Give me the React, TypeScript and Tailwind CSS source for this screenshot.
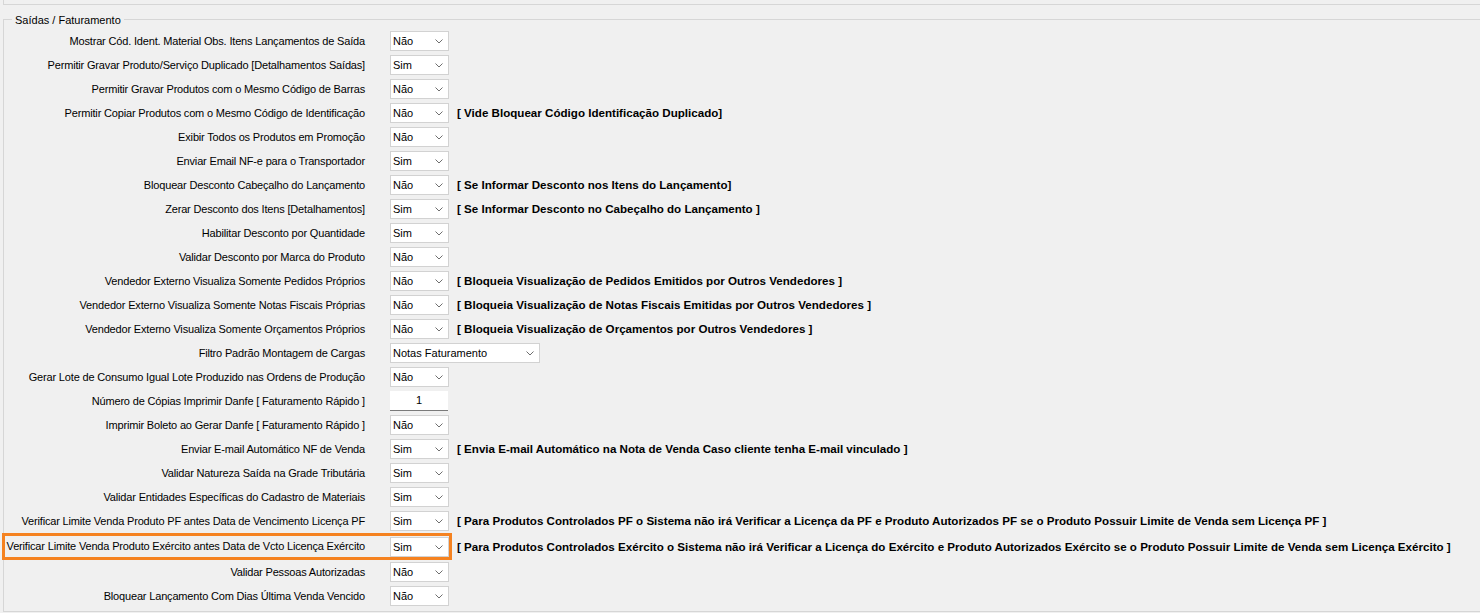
import React from 'react'

type Row = {
  label: string
  value?: string
  kind?: 'select' | 'wide' | 'number'
  note?: string
  marked?: boolean
}

const rows: Row[] = [
  { label: 'Mostrar Cód. Ident. Material Obs. Itens Lançamentos de Saída', value: 'Não' },
  { label: 'Permitir Gravar Produto/Serviço Duplicado [Detalhamentos Saídas]', value: 'Sim' },
  { label: 'Permitir Gravar Produtos com o Mesmo Código de Barras', value: 'Não' },
  { label: 'Permitir Copiar Produtos com o Mesmo Código de Identificação', value: 'Não', note: '[ Vide Bloquear Código Identificação Duplicado]' },
  { label: 'Exibir Todos os Produtos em Promoção', value: 'Não' },
  { label: 'Enviar Email NF-e para o Transportador', value: 'Sim' },
  { label: 'Bloquear Desconto Cabeçalho do Lançamento', value: 'Não', note: '[ Se Informar Desconto nos Itens do Lançamento]' },
  { label: 'Zerar Desconto dos Itens [Detalhamentos]', value: 'Sim', note: '[ Se Informar Desconto no Cabeçalho do Lançamento ]' },
  { label: 'Habilitar Desconto por Quantidade', value: 'Sim' },
  { label: 'Validar Desconto por Marca do Produto', value: 'Não' },
  { label: 'Vendedor Externo Visualiza Somente Pedidos Próprios', value: 'Não', note: '[ Bloqueia Visualização de Pedidos Emitidos por Outros Vendedores ]' },
  { label: 'Vendedor Externo Visualiza Somente Notas Fiscais Próprias', value: 'Não', note: '[ Bloqueia Visualização de Notas Fiscais Emitidas por Outros Vendedores ]' },
  { label: 'Vendedor Externo Visualiza Somente Orçamentos Próprios', value: 'Não', note: '[ Bloqueia Visualização de Orçamentos por Outros Vendedores ]' },
  { label: 'Filtro Padrão Montagem de Cargas', value: 'Notas Faturamento', kind: 'wide' },
  { label: 'Gerar Lote de Consumo Igual Lote Produzido nas Ordens de Produção', value: 'Não' },
  { label: 'Número de Cópias Imprimir Danfe [ Faturamento Rápido ]', value: '1', kind: 'number' },
  { label: 'Imprimir Boleto ao Gerar Danfe [ Faturamento Rápido ]', value: 'Não' },
  { label: 'Enviar E-mail Automático NF de Venda', value: 'Sim', note: '[ Envia E-mail Automático na Nota de Venda Caso cliente tenha E-mail vinculado ]' },
  { label: 'Validar Natureza Saída na Grade Tributária', value: 'Sim' },
  { label: 'Validar Entidades Específicas do Cadastro de Materiais', value: 'Sim' },
  { label: 'Verificar Limite Venda Produto PF antes Data de Vencimento Licença PF', value: 'Sim', note: '[ Para Produtos Controlados PF o Sistema não irá Verificar a Licença da PF e Produto Autorizados PF se o Produto Possuir Limite de Venda sem Licença PF ]' },
  { label: 'Verificar Limite Venda Produto Exército antes Data de Vcto Licença Exército', value: 'Sim', marked: true, note: '[ Para Produtos Controlados Exército o Sistema não irá Verificar a Licença do Exército e Produto Autorizados Exército se o Produto Possuir Limite de Venda sem Licença Exército ]' },
  { label: 'Validar Pessoas Autorizadas', value: 'Não' },
  { label: 'Bloquear Lançamento Com Dias Última Venda Vencido', value: 'Não' },
]

function Chevron() {
  return (
    <svg width="8" height="5" viewBox="0 0 8 5" className="shrink-0">
      <polyline points="0.5,0.5 4,4 7.5,0.5" fill="none" stroke="#6e6e6e" strokeWidth="1" />
    </svg>
  )
}

function Field({ row }: { row: Row }) {
  if (row.kind === 'number') {
    return (
      <div className="ml-[25px] w-[58px] h-[20px] bg-white border-b border-[#7a7a7a] flex items-center justify-center text-[11px]">
        {row.value}
      </div>
    )
  }
  const w = row.kind === 'wide' ? 'w-[150px]' : 'w-[59px]'
  return (
    <div className={`ml-[25px] ${w} h-[20px] bg-white border border-[#d2d2d2] flex items-center justify-between pl-[2px] pr-[5px] text-[11px]`}>
      <span>{row.value}</span>
      <Chevron />
    </div>
  )
}

function Note({ text, ml }: { text?: string; ml: string }) {
  if (!text) return null
  return <span className={`${ml} whitespace-nowrap font-bold text-[11.6px] text-black`}>{text}</span>
}

export default function App() {
  return (
    <div
      className="w-[1480px] h-[613px] bg-[#f0f0f0] overflow-hidden text-black"
      style={{ fontFamily: '"Liberation Sans", Arial, sans-serif' }}
    >
      {/* bottom edge of the panel above */}
      <div className="ml-[3px] h-[5px] border-l border-b border-[#d6d6d6]" />

      <div className="ml-[3px] mt-[9px]">
        {/* group header */}
        <div className="flex h-[12px]">
          <div className="w-[9px] mt-[5px] border-t border-l border-[#d6d6d6]" />
          <span className="px-[3px] text-[11px] leading-[12px] whitespace-nowrap">Saídas / Faturamento</span>
          <div className="flex-1 mt-[5px] border-t border-[#d6d6d6]" />
        </div>

        <div className="border-l border-b border-[#d6d6d6] pt-[3px] pb-[3px]">
          {rows.map((r) =>
            r.marked ? (
              <div key={r.label} className="flex items-center h-[27px]">
                <div className="-ml-[2px] h-[27px] border-[3px] border-[#f58220] flex items-end">
                  <div className="w-[360px] flex justify-end self-center text-[11px] tracking-[-0.17px] whitespace-nowrap">{r.label}</div>
                  <Field row={r} />
                </div>
                <Note text={r.note} ml="ml-[5px]" />
              </div>
            ) : (
              <div key={r.label} className="flex items-center h-6">
                <div className="w-[361px] flex justify-end text-[11px] tracking-[-0.17px] whitespace-nowrap">{r.label}</div>
                <Field row={r} />
                <Note text={r.note} ml="ml-[8px]" />
              </div>
            )
          )}
        </div>
      </div>
    </div>
  )
}
